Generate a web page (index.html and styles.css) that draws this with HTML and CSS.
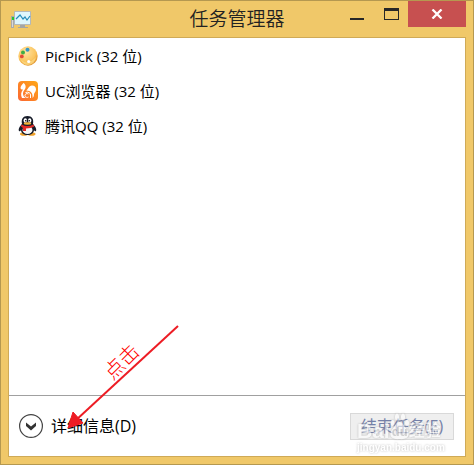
FILE: index.html
```html
<!DOCTYPE html>
<html lang="zh-CN">
<head>
<meta charset="utf-8">
<title>任务管理器</title>
<link rel="stylesheet" href="styles.css">
</head>
<body>
<div class="window">
  <header class="titlebar">
    <svg class="app-icon" viewBox="0 0 21 18" aria-hidden="true">
      <rect x="0" y="5" width="3" height="12" fill="#a9aaa9"/><rect x="1" y="6" width="2" height="3" fill="#2bc42b"/><rect x="1" y="9" width="1" height="7" fill="#d8d8d8"/>
      <rect x="3" y="0" width="17" height="14" rx="1" fill="#b3b9bc"/><rect x="4" y="1" width="15" height="12" fill="#def6fd"/>
      <path d="M5 8l4-4 3 4 2-2 2 3 3-4" fill="none" stroke="#278dbb" stroke-width="1.2"/>
      <path d="M9 14h5v2h3v1H7v-1h2z" fill="#a4a6a6"/>
    </svg>
    <h1 class="title">任务管理器</h1>
    <div class="controls">
      <button class="control" aria-label="最小化"><svg width="14" height="20" viewBox="0 0 14 20"><path d="M0 17h14v2H0z" fill="#272727"/></svg></button>
      <button class="control" aria-label="最大化"><svg width="15" height="20" viewBox="0 0 15 20"><path d="M0 7h15v12H0zM1 10v8h13v-8z" fill="#272727" fill-rule="evenodd"/></svg></button>
      <button class="control close" aria-label="关闭"><svg width="12" height="10" viewBox="0 0 12 10"><path d="M1.5.5l9 9M10.5.5l-9 9" stroke="#fff" stroke-width="2.3"/></svg></button>
    </div>
  </header>
  <main class="content">
    <ul class="tasks">
      <li class="task">
        <svg class="task-icon" viewBox="0 0 20 20" aria-hidden="true">
          <defs><radialGradient id="palette" cx=".4" cy=".3" r=".75"><stop offset="0" stop-color="#ffe3a0"/><stop offset=".65" stop-color="#fbc55f"/><stop offset="1" stop-color="#db8b25"/></radialGradient></defs>
          <circle cx="10" cy="10" r="9.7" fill="url(#palette)"/>
          <path d="M3 14q7 6 15-3-1 7-8 8-5 0-7-5z" fill="#ffe08a" opacity=".7"/>
          <circle cx="9.5" cy="3.8" r="2" fill="#3598c8"/><circle cx="5" cy="6.4" r="2" fill="#3fae45"/><circle cx="3.8" cy="10.4" r="1.9" fill="#e34b38"/><circle cx="10.7" cy="15.5" r="1.6" fill="#fff"/>
        </svg>
        <span>PicPick (32 位)</span>
      </li>
      <li class="task">
        <svg class="task-icon" viewBox="0 0 20 20" aria-hidden="true">
          <defs><linearGradient id="uc" x1="1" x2="0" y2="1"><stop offset="0" stop-color="#ffa817"/><stop offset="1" stop-color="#fb6632"/></linearGradient></defs>
          <rect width="20" height="20" rx="4" fill="url(#uc)"/>
          <path d="M2.500 7C2.500 5 4 4 5.500 2 7 3 8 4.500 7.500 7 7 9 5 10 5 12.500c0 2 1 3.500 3 4.500H4c-1.500-3-1-6 1-8.500-1.500.3-2.500-.5-2.500-1.500z" fill="#fff"/>
          <path d="M8 9.500C10 9 10.500 4.500 14 4.500c2.500 0 4 1.500 4 4 0 2.500-2 3-2 5 0 1.500-.5 2.500-1.500 3.500C15 13 13.500 9.500 8 9.500z" fill="#fff"/>
          <path d="M7.500 11.500c3-1 5 .5 5 2.500v3M10.500 13c-2-1-3.500 0-3.500 1.500s2 2.500 3.500 1.500" fill="none" stroke="#fff"/>
        </svg>
        <span>UC浏览器 (32 位)</span>
      </li>
      <li class="task">
        <svg class="task-icon" viewBox="0 0 20 20" aria-hidden="true">
          <ellipse cx="6" cy="18" rx="4" ry="1.800" fill="#efa12b"/><ellipse cx="13.500" cy="18" rx="4" ry="1.800" fill="#efa12b"/>
          <path d="M4 8C3 3 5 0 9.500 0S16 3 15 8c2 2 4 5 3 7-1 1-2-1-2-1 0 3-3 5-6.500 5S3 17 3 14c0 0-1 2-2 1-1-2 1-5 3-7z" fill="#171c29"/>
          <ellipse cx="9.500" cy="14" rx="5" ry="4" fill="#f5f5f6"/>
          <ellipse cx="7.300" cy="4.500" rx="1.700" ry="2.300" fill="#fff"/><ellipse cx="11.700" cy="4.500" rx="1.700" ry="2.300" fill="#fff"/><circle cx="7.800" cy="4.700" r=".8"/><circle cx="11.200" cy="4.700" r=".8"/>
          <ellipse cx="9.500" cy="7.500" rx="3.700" ry="1.200" fill="#f4b334"/>
          <path d="M3.500 8.500q6 3 12 0l.7 2q-3 2-8.200 2V15H5v-3l-2-1.500z" fill="#e22b27"/>
        </svg>
        <span>腾讯QQ (32 位)</span>
      </li>
    </ul>
    <footer class="footer">
      <button class="details">
        <svg width="24" height="24" viewBox="0 0 24 24" aria-hidden="true"><circle cx="12" cy="12" r="11.4" fill="#fff" stroke="#444" stroke-width="1.2"/><path d="M7 8.500l5 4 5-4v3.500l-5 4.500-5-4.500z" fill="#333"/></svg>
        <span>详细信息(D)</span>
      </button>
      <div class="end-wrap">
        <button class="end" disabled>结束任务(<u>E</u>)</button>
        <div class="watermark" aria-hidden="true">
          <span class="brand">Bai<span class="paw"><svg width="19" height="28" viewBox="0 0 19 28"><ellipse cx="7" cy="4" rx="2" ry="3.500"/><ellipse cx="13" cy="4" rx="2" ry="3.500"/><ellipse cx="2.500" cy="10" rx="2" ry="3"/><ellipse cx="17" cy="10" rx="2" ry="3"/><path d="M9.500 9c4 0 4 4 7 7 5 6 1 11-7 10-8 1-12-4-7-10 3-3 3-7 7-7z"/></svg><span class="du">du</span></span><span class="cn">经验</span></span>
          <span class="site">jingyan.baidu.com</span>
        </div>
      </div>
    </footer>
  </main>
  <div class="annotation">
    <svg width="114" height="108" viewBox="0 0 114 108" aria-hidden="true"><path d="M111 3L8 98" stroke="#ed1c24" stroke-width="2"/><path d="M1 105l5-16 10 11z" fill="#ed1c24" stroke="#ed1c24"/></svg>
    <span class="note">点击</span>
  </div>
</div>
</body>
</html>
```

FILE: styles.css
```css
* { box-sizing: border-box; }
body {
  margin: 0;
  font: 15px/20px "Open Sans", "Noto Sans CJK SC", sans-serif;
  color: #000;
}
button { font: inherit; border: 0; padding: 0; background: none; }
svg { display: block; flex: none; }
.window {
  position: relative;
  display: flex;
  flex-direction: column;
  min-height: 100vh;
  padding: 0 7px 7px;
  border: 1px solid #b59850;
  background: #f0c869;
}
.titlebar {
  display: grid;
  grid-template-columns: 1fr auto 1fr;
  height: 36px;
}
.app-icon { width: 21px; height: 18px; margin: 10px 0 0 3px; }
.title {
  margin: 0;
  font-size: 19px;
  line-height: 36px;
  font-weight: 350;
  color: #222;
}
.controls { display: flex; justify-content: flex-end; }
.control { display: flex; justify-content: center; width: 34px; height: 26px; }
.close { align-items: center; width: 58px; background: #c75050; }
.content {
  flex: 1;
  display: flex;
  flex-direction: column;
  border: 1px solid #cfaa57;
  background: #fff;
}
.tasks { flex: 1; margin: 0; padding: 0; list-style: none; }
.task {
  display: flex;
  align-items: center;
  gap: 7px;
  height: 35px;
  padding-left: 9px;
  line-height: 18px;
}
.task-icon { width: 20px; height: 20px; }
.footer {
  display: flex;
  justify-content: space-between;
  align-items: center;
  height: 61px;
  padding: 0 11px 0 10px;
  border-top: 1px solid #a0a0a0;
}
.details { display: flex; align-items: center; gap: 8px; color: #000; font-size: 16px; }
.end-wrap { position: relative; }
.end {
  display: block;
  width: 104px;
  height: 27px;
  border: 1px solid #d9d9d9;
  background: #efefef;
  color: #7480a8;
  font-size: 16px;
  line-height: 18px;
}
.watermark {
  position: absolute;
  top: 0;
  left: 7px;
  color: #fff;
  fill: #fff;
  opacity: .6;
  font-family: "Liberation Sans", "Noto Sans CJK SC", sans-serif;
  font-weight: 700;
  white-space: nowrap;
  filter: drop-shadow(0 0 1px #999);
}
.brand { display: flex; align-items: flex-end; font-size: 21px; line-height: 20px; }
.paw { position: relative; }
.du {
  position: absolute;
  left: 2px;
  bottom: 1px;
  font-size: 13px;
  line-height: 16px;
  color: #bbb;
}
.cn { font-size: 16px; }
.site { display: block; font-size: 10px; line-height: 14px; }
.annotation { position: absolute; left: 66px; bottom: 33px; pointer-events: none; }
.note {
  position: absolute;
  left: 34px;
  top: 24px;
  font-family: "Noto Sans CJK SC", sans-serif;
  font-size: 20px;
  line-height: 28px;
  font-weight: 300;
  white-space: nowrap;
  color: #f00;
  transform: rotate(-45deg);
}
```
